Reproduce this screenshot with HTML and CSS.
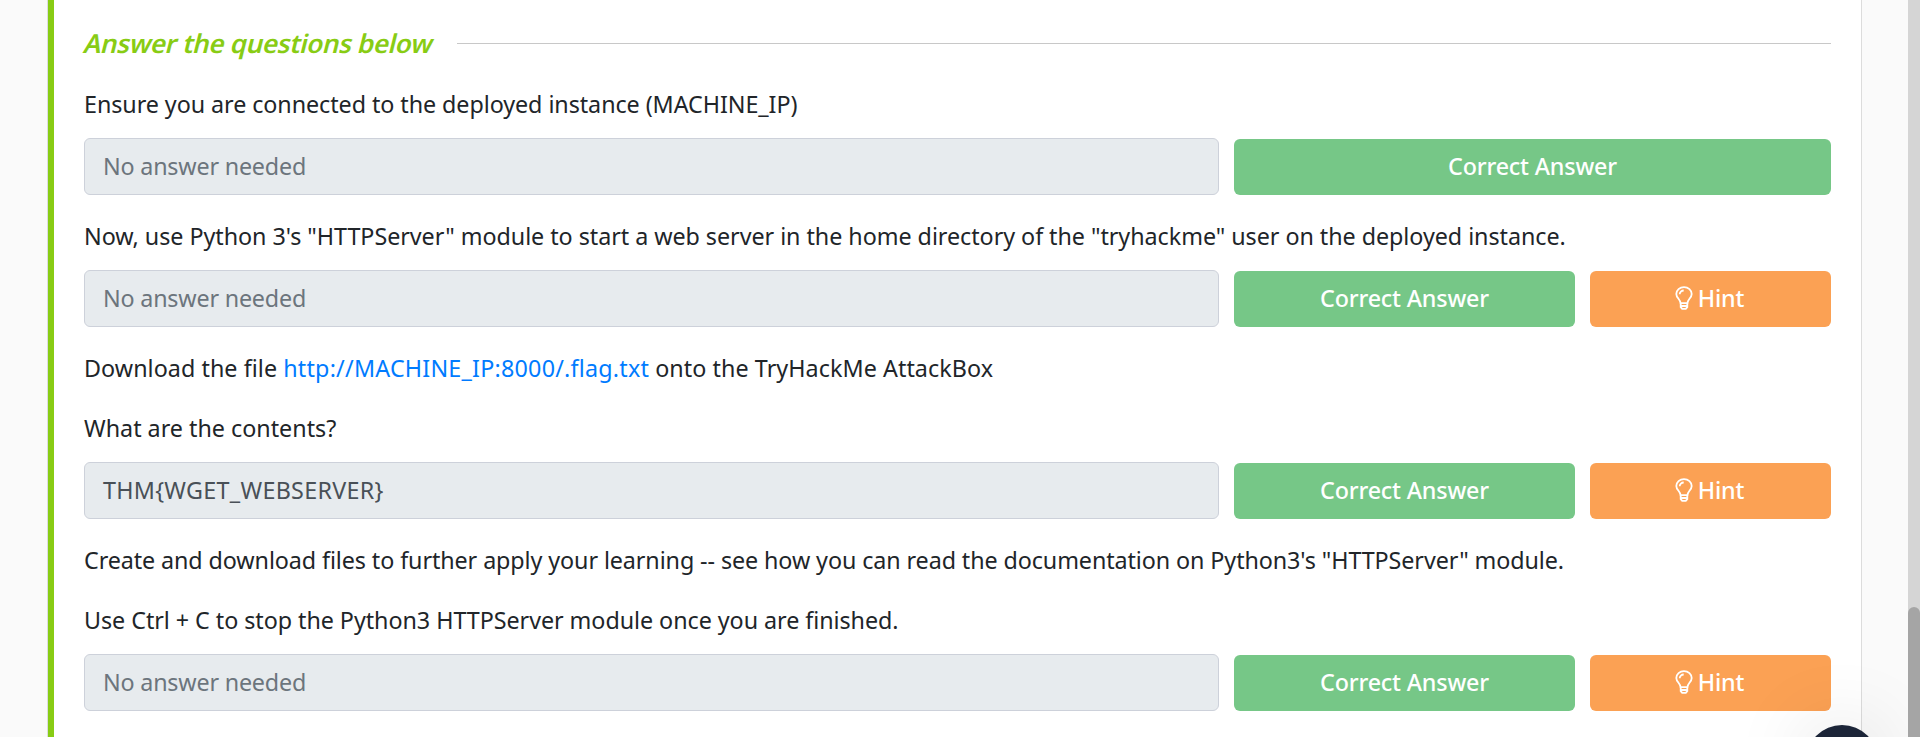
FILE: index.html
```
<!DOCTYPE html>
<html lang="en">
<head>
<meta charset="utf-8">
<title>Questions</title>
<link rel="stylesheet" href="styles.css">
</head>
<body>
<svg class="defs" width="0" height="0">
  <symbol id="bulb" viewBox="0 0 18 24">
    <path d="M5.6 17.2C5.4 13.4 1.3 12 1.3 7.9a7.7 6.8 0 0 1 15.4 0c0 4.100-4.100 5.500-4.300 9.300z"/>
    <path d="M4.700 8.200a4 3.700 0 0 1 4-3.700"/>
    <path d="M5.700 17.200v4l1.500 1.700h3.600l1.500-1.700v-4M5.700 20h6.600"/>
  </symbol>
</svg>
<main class="panel">
  <header class="section-head"><h2 class="section-title">Answer the questions below</h2><span class="rule"></span></header>
  <section class="question">
    <p class="connect">Ensure you are connected to the deployed instance (MACHINE_IP)</p>
    <div class="row row-wide"><div class="field muted">No answer needed</div><div class="btn correct">Correct Answer</div></div>
  </section>
  <section class="question">
    <p class="serve">Now, use Python 3's "HTTPServer" module to start a web server in the home directory of the "tryhackme" user on the deployed instance.</p>
    <div class="row"><div class="field muted">No answer needed</div><div class="btn correct">Correct Answer</div><div class="btn hint"><svg class="icon"><use href="#bulb"/></svg><span>Hint</span></div></div>
  </section>
  <section class="question">
    <p class="download">Download the file <a class="link">http://MACHINE_IP:8000/.flag.txt</a> onto the TryHackMe AttackBox</p>
    <p>What are the contents?</p>
    <div class="row"><div class="field flag">THM{WGET_WEBSERVER}</div><div class="btn correct">Correct Answer</div><div class="btn hint"><svg class="icon"><use href="#bulb"/></svg><span>Hint</span></div></div>
  </section>
  <section class="question">
    <p class="create">Create and download files to further apply your learning -- see how you can read the documentation on Python3's "HTTPServer" module.</p>
    <p class="stop">Use Ctrl + C to stop the Python3 HTTPServer module once you are finished.</p>
    <div class="row"><div class="field muted">No answer needed</div><div class="btn correct">Correct Answer</div><div class="btn hint"><svg class="icon"><use href="#bulb"/></svg><span>Hint</span></div></div>
  </section>
</main>
<div class="scrollbar"><div class="thumb"></div></div>
<div class="chat-clip"><div class="chat"></div></div>
</body>
</html>
```
FILE: styles.css
```
* { box-sizing: border-box; }
html { overflow: hidden; }
body {
  margin: 0;
  height: 737px;
  overflow: hidden;
  display: flex;
  background: #fafafa;
  color: #212529;
  font: 23.3px/36px "Noto Sans", sans-serif;
}
.defs { position: absolute; }
.panel {
  flex: 1;
  height: 737px;
  overflow: hidden;
  margin: 0 46px 0 47px;
  padding: 25px 30px 0 36px;
  border-left: 1px solid #dcdce0;
  border-right: 1px solid #dcdcdc;
  box-shadow: inset 6px 0 0 #88cc14;
  background-color: #fff;
}
.section-head { display: flex; align-items: center; gap: 24px; height: 36px; margin-bottom: 25px; }
.section-title {
  width: 349px;
  margin: 0;
  padding-left: 1px;
  font-size: 26px;
  font-weight: 600;
  letter-spacing: -.37px;
  color: #88cc14;
  transform: skewX(-14deg);
  white-space: nowrap;
}
.rule { flex: 1; height: 1px; background: #c8c8c8; }
p { margin: 0 0 24px; white-space: nowrap; }
.connect { letter-spacing: -.06px; }
.serve { letter-spacing: -.041px; }
.download { letter-spacing: .06px; }
.create { letter-spacing: -.088px; }
.stop { letter-spacing: -.045px; }
.row { display: grid; grid-template-columns: 1135px 341px 241px; gap: 15px; align-items: end; margin: -8px 0 23px; }
.row-wide { grid-template-columns: 1135px 597px; }
.field { height: 57px; padding: 9px 18px; border: 1px solid #cdd1da; border-radius: 6px; background: #e7ebee; color: #495057; }
.flag { letter-spacing: .29px; }
.muted { color: #6c757d; letter-spacing: -.19px; }
.btn { height: 56px; padding-bottom: 2px; display: flex; align-items: center; justify-content: center; border-radius: 6px; color: #fff; font-weight: 500; letter-spacing: -.17px; }
.correct { background: #76c787; }
.hint { padding-right: 2px; background: #fba154; gap: 5px; }
.icon { width: 18px; height: 24px; fill: none; stroke: #fff; stroke-width: 1.8; }
.link { color: #007bff; letter-spacing: .22px; }
.scrollbar { width: 12px; background: #d5d5d5; display: flex; align-items: end; }
.thumb { width: 12px; height: 130px; border-radius: 6px 6px 0 0; background: #a5a5a5; }
/* floating chat launcher, cut off by the bottom of the window */
.chat-clip { position: absolute; left: 1700px; top: 637px; width: 208px; height: 100px; overflow: hidden; }
.chat { margin: 88px 0 0 106px; width: 72px; height: 72px; border-radius: 50%; background: #1c2538; box-shadow: 0 0 80px rgba(0,0,0,.13); }
```
